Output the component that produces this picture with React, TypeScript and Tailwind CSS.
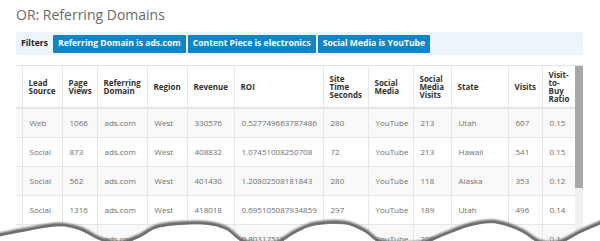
import React from "react";

type Row = string[];

const cols: { label: string[]; w: number }[] = [
  { label: [], w: 6 },
  { label: ["Lead", "Source"], w: 40 },
  { label: ["Page", "Views"], w: 35 },
  { label: ["Referring", "Domain"], w: 50 },
  { label: ["Region"], w: 40 },
  { label: ["Revenue"], w: 47 },
  { label: ["ROI"], w: 89 },
  { label: ["Site", "Time", "Seconds"], w: 45 },
  { label: ["Social", "Media"], w: 45 },
  { label: ["Social", "Media", "Visits"], w: 38 },
  { label: ["State"], w: 57 },
  { label: ["Visits"], w: 34 },
  { label: ["Visit-", "to-", "Buy", "Ratio"], w: 33 },
];

const rows: Row[] = [
  ["", "Web", "1066", "ads.com", "West", "330576", "0.527749663787486", "280", "YouTube", "213", "Utah", "607", "0.15"],
  ["", "Social", "873", "ads.com", "West", "408832", "1.07451008250708", "72", "YouTube", "213", "Hawaii", "541", "0.15"],
  ["", "Social", "562", "ads.com", "West", "401430", "1.20802508181843", "280", "YouTube", "118", "Alaska", "353", "0.12"],
  ["", "Social", "1316", "ads.com", "West", "418018", "0.695105087934859", "297", "YouTube", "189", "Utah", "496", "0.14"],
  ["", "Social", "920", "ads.com", "West", "398120", "0.803175198652341", "150", "YouTube", "206", "Texas", "412", "0.1"],
];

const pts: [number, number][] = [
  [-10, 237], [20, 231], [58, 225], [80, 229], [100, 239], [120, 243], [140, 236], [160, 226],
  [200, 223], [225, 228], [245, 242], [275, 243], [295, 232], [315, 224], [345, 223], [365, 231],
  [382, 242], [420, 243], [445, 234], [470, 225], [495, 222], [520, 230], [540, 242], [560, 242],
  [582, 231], [610, 219],
];

function smooth(p: [number, number][], dy = 0): string {
  let d = `M${p[0][0]},${p[0][1] + dy}`;
  for (let i = 0; i < p.length - 1; i++) {
    const p0 = p[i - 1] || p[i];
    const p1 = p[i];
    const p2 = p[i + 1];
    const p3 = p[i + 2] || p2;
    const c1x = p1[0] + (p2[0] - p0[0]) / 6;
    const c1y = p1[1] + (p2[1] - p0[1]) / 6 + dy;
    const c2x = p2[0] - (p3[0] - p1[0]) / 6;
    const c2y = p2[1] - (p3[1] - p1[1]) / 6 + dy;
    d += ` C${c1x},${c1y} ${c2x},${c2y} ${p2[0]},${p2[1] + dy}`;
  }
  return d;
}

function Tear() {
  const edge = smooth(pts);
  const fill = smooth(pts, 1.5) + " L610,260 L-10,260 Z";
  return (
    <svg className="absolute left-0 top-0 pointer-events-none" width={600} height={241} viewBox="0 0 600 241">
      <defs>
        <filter id="blur" x="-10%" y="-50%" width="120%" height="200%">
          <feGaussianBlur stdDeviation="1.1" />
        </filter>
      </defs>
      <path d={edge} fill="none" stroke="#666666" strokeWidth={4.5} filter="url(#blur)" />
      <path d={fill} fill="#ffffff" />
    </svg>
  );
}

export default function App() {
  return (
    <div className="relative w-[600px] h-[241px] overflow-hidden bg-white" style={{ fontFamily: "'Open Sans', 'Noto Sans', sans-serif" }}>
      <div className="pl-[16px] pr-[17px]">
        <div className="h-[32px] flex items-center pb-[3px]">
          <h1 className="text-[14px] leading-none text-[#6a6a6a] font-normal">OR: Referring Domains</h1>
        </div>
        <div className="h-[23px] bg-[#eef4fb] rounded-[2px] flex items-center pl-[5px] gap-[2px]">
          <span className="text-[8.6px] font-bold text-[#222] mr-[3px]">Filters</span>
          <span className="h-[18px] flex items-center px-[5px] bg-[#0b86c8] text-white text-[8.6px] font-bold rounded-[1px]">Referring Domain is ads.com</span>
          <span className="h-[18px] flex items-center px-[5px] bg-[#0b86c8] text-white text-[8.6px] font-bold rounded-[1px]">Content Piece is electronics</span>
          <span className="h-[18px] flex items-center px-[5px] bg-[#0b86c8] text-white text-[8.6px] font-bold rounded-[1px]">Social Media is YouTube</span>
        </div>
        <div className="mt-[10px] flex h-[200px] border-t border-[#e3e3e3]">
          <div className="w-[559px] overflow-hidden">
            <table className="table-fixed border-collapse w-[559px]">
              <colgroup>
                {cols.map((c, i) => (
                  <col key={i} style={{ width: c.w }} />
                ))}
              </colgroup>
              <thead>
                <tr className="h-[42px]">
                  {cols.map((c, i) => (
                    <th
                      key={i}
                      className="border-r border-b-2 border-[#e6e6e6] text-left align-middle pl-[6px] pr-0 text-[8px] leading-[8px] font-bold text-[#333] whitespace-nowrap overflow-hidden"
                    >
                      {c.label.map((l, j) => (
                        <div key={j}>{l}</div>
                      ))}
                    </th>
                  ))}
                </tr>
              </thead>
              <tbody>
                {rows.map((r, ri) => (
                  <tr key={ri} className={ri % 2 === 0 ? "h-[29px] bg-[#f9f9f9]" : "h-[29px] bg-white"}>
                    {r.map((v, ci) => (
                      <td
                        key={ci}
                        className="border-r border-b border-[#e6e6e6] align-middle pl-[7px] pr-0 text-[8px] leading-none text-[#6e6e6e] whitespace-nowrap overflow-hidden"
                      >
                        {v}
                      </td>
                    ))}
                  </tr>
                ))}
              </tbody>
            </table>
          </div>
          <div className="w-[8px] bg-[#f1f1f1] flex flex-col">
            <div className="h-[122px] bg-[#a8a8a8]" />
          </div>
        </div>
      </div>
      <Tear />
    </div>
  );
}
